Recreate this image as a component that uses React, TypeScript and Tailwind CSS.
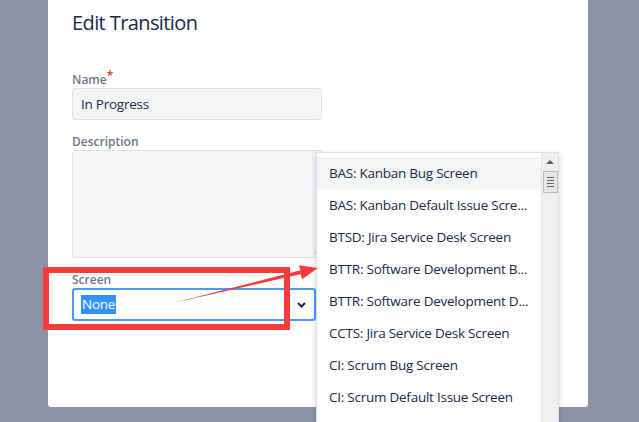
import React from "react";

const items = [
  "BAS: Kanban Bug Screen",
  "BAS: Kanban Default Issue Scre...",
  "BTSD: Jira Service Desk Screen",
  "BTTR: Software Development B...",
  "BTTR: Software Development D...",
  "CCTS: Jira Service Desk Screen",
  "CI: Scrum Bug Screen",
  "CI: Scrum Default Issue Screen",
];

export default function App() {
  const font = { fontFamily: '"Open Sans", "Noto Sans", sans-serif' };
  return (
    <div
      className="relative w-[639px] h-[422px] overflow-hidden bg-[#8b94a6]"
      style={font}
    >
      <div className="ml-[48px] w-[540px] h-[407px] bg-white rounded-b-[3px] pl-[24px] pt-[11px] flex flex-col">
        <div className="text-[20px] leading-[24px] tracking-[-0.6px] text-[#172b4d]">Edit Transition</div>

        <div className="mt-[37px] text-[12px] leading-[16px] text-[#6b778c] font-semibold">
          Name<span className="text-[#de350b] relative -top-[4px]">*</span>
        </div>
        <div className="w-[250px] h-[32px] bg-[#f4f5f7] border border-[#dfe1e6] rounded-[3px] flex items-center pl-[8px] text-[13.5px] tracking-[-0.25px] text-[#172b4d]">
          In Progress
        </div>

        <div className="mt-[14px] text-[12px] leading-[16px] text-[#6b778c] font-semibold">
          Description
        </div>
        <div className="relative w-[250px] h-[108px] bg-[#f4f5f7] border border-[#dfe1e6] rounded-[3px]">
          <svg className="absolute right-[2px] bottom-[2px]" width="6" height="6" viewBox="0 0 6 6">
            <path d="M5 1 L1 5 M5 3.5 L3.5 5" stroke="#b3bac5" strokeWidth="1" />
          </svg>
        </div>

        <div className="mt-[14px] text-[12px] leading-[16px] text-[#6b778c] font-semibold">
          Screen
        </div>
        <div className="w-[244px] h-[33px] bg-white border-2 border-[#4c9aff] rounded-[3px] flex items-center pl-[7px] pr-[8px] text-[13.5px] tracking-[-0.25px]">
          <span className="bg-[#3390ff] text-white leading-[19px] px-[1px]">None</span>
          <svg className="ml-auto" width="9" height="6" viewBox="0 0 9 6">
            <path d="M1 1 L4.5 4.5 L8 1" stroke="#172b4d" strokeWidth="2" fill="none" />
          </svg>
        </div>
      </div>

      {/* dropdown */}
      <div className="absolute left-[316px] top-[152px] w-[243px] h-[290px] bg-white border border-[#dfe1e6] shadow-[0_2px_6px_rgba(9,30,66,0.2)] flex">
        <div className="flex-1 pt-[4px] flex flex-col">
          {items.map((t, i) => (
            <div
              key={i}
              className={
                "h-[32px] shrink-0 flex items-center pl-[12px] text-[13.5px] tracking-[-0.25px] text-[#172b4d] whitespace-nowrap " +
                (i === 0 ? "bg-[#f4f5f7]" : "")
              }
            >
              {t}
            </div>
          ))}
        </div>
        <div className="w-[17px] bg-[#f0f0f0] border-l border-[#e6e6e6] flex flex-col items-center">
          <div className="h-[17px] flex items-center justify-center">
            <svg width="8" height="5" viewBox="0 0 8 5">
              <path d="M0 5 L4 1 L8 5 Z" fill="#606060" />
            </svg>
          </div>
          <div className="mt-[1px] w-[15px] h-[22px] bg-[#e6e6e6] border border-[#bdbdbd] flex flex-col items-center justify-center gap-[2px]">
            <div className="w-[7px] h-[1px] bg-[#606060]" />
            <div className="w-[7px] h-[1px] bg-[#606060]" />
            <div className="w-[7px] h-[1px] bg-[#606060]" />
            <div className="w-[7px] h-[1px] bg-[#606060]" />
          </div>
        </div>
      </div>

      {/* red highlight box */}
      <div className="absolute left-[43px] top-[267px] w-[247px] h-[63px] border-[6px] border-[#fb3b3b]" />

      {/* red arrow */}
      <svg className="absolute left-0 top-0 pointer-events-none" width="639" height="422" viewBox="0 0 639 422">
        <polygon
          points="173,303 300.5,270.3 298.9,265.2 318,268 302.1,279.2 300.5,274.2"
          fill="#fb3b3b"
        />
      </svg>
    </div>
  );
}
